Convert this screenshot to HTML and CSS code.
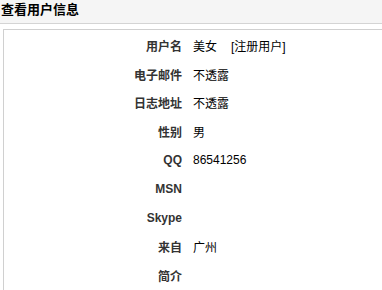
FILE: index.html
```html
<!DOCTYPE html>
<html lang="zh-CN">
<head>
    <meta charset="UTF-8">
    <title>查看用户信息</title>
    <link rel="stylesheet" href="styles.css">
</head>
<body>
<div class="title-bar">
    <h3>查看用户信息</h3>
</div>
<div class="box">
    <ul class="info">
        <li><span class="label">用户名</span><span class="value">美女<em class="tag">[注册用户]</em></span></li>
        <li><span class="label">电子邮件</span><span class="value">不透露</span></li>
        <li><span class="label">日志地址</span><span class="value">不透露</span></li>
        <li><span class="label">性别</span><span class="value">男</span></li>
        <li><span class="label">QQ</span><span class="value">86541256</span></li>
        <li><span class="label">MSN</span><span class="value"></span></li>
        <li><span class="label">Skype</span><span class="value"></span></li>
        <li><span class="label">来自</span><span class="value">广州</span></li>
        <li><span class="label">简介</span><span class="value"></span></li>
    </ul>
</div>
</body>
</html>
```

FILE: styles.css
```css
*{
    margin: 0;
    padding: 0;
}
ul{
    list-style-type: none;
}
html, body{
    height: 100%;
    overflow: hidden;
}
body{
    background-color: #fff;
    font-family: "Liberation Sans", "Noto Sans CJK SC", sans-serif;
    font-size: 12px;
    color: #000;
}
.title-bar{
    height: 23px;
    background-color: #f5f5f5;
    border-bottom: 1px solid #d4d4d4;
}
.title-bar h3{
    font-size: 13px;
    line-height: 20px;
    padding-left: 1px;
    color: #000;
}
.box{
    margin: 5px 0 0 3px;
    border-top: 1px solid #d0d0d0;
    border-left: 1px solid #d0d0d0;
    padding-top: 1px;
    min-height: 270px;
}
.info li{
    display: grid;
    grid-template-columns: 178px 1fr;
    column-gap: 11px;
    height: 28.75px;
    align-items: center;
}
.info .label{
    text-align: right;
    font-weight: bold;
    color: #333;
}
.info .tag{
    font-style: normal;
    margin-left: 14px;
}
```
